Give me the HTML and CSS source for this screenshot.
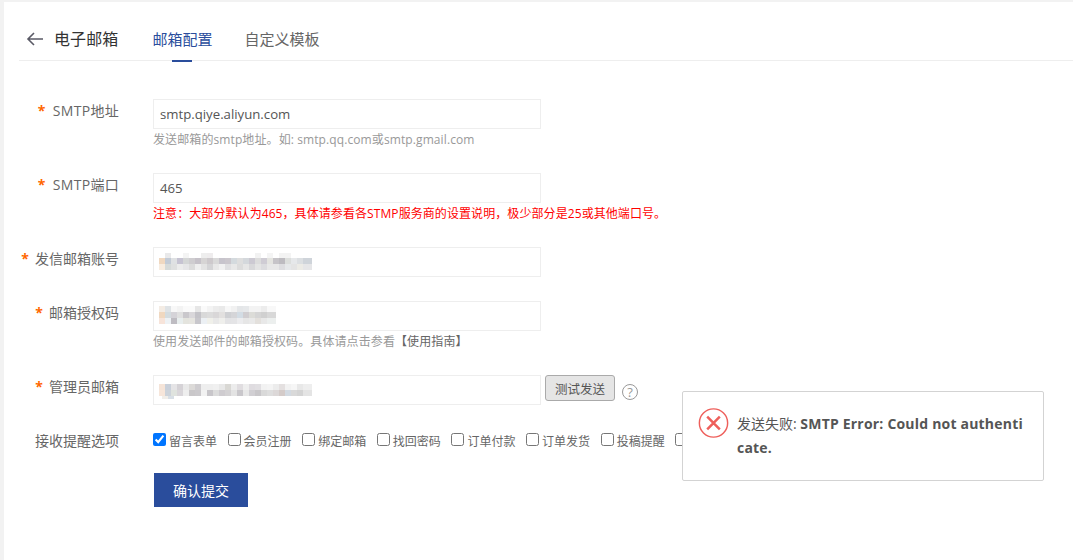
FILE: index.html
```html
<!DOCTYPE html>
<html lang="zh-CN">
<head>
<meta charset="utf-8">
<title>电子邮箱</title>
<link rel="stylesheet" href="styles.css">
</head>
<body>
<main class="page">
  <header class="head">
    <svg class="back" width="18" height="14" viewBox="0 0 18 14"><path d="M17 7H2M8 1L2 7l6 6" fill="none" stroke="#5a5a66" stroke-width="1.6"/></svg>
    <h1 class="title">电子邮箱</h1>
    <nav class="tabs">
      <a class="tab active">邮箱配置</a>
      <a class="tab">自定义模板</a>
    </nav>
  </header>
  <form class="form">
    <div class="row">
      <label class="lab latin"><i>*</i>SMTP地址</label>
      <div class="field"><div class="input">smtp.qiye.aliyun.com</div><p class="hint">发送邮箱的smtp地址。如: smtp.qq.com或smtp.gmail.com</p></div>
    </div>
    <div class="row">
      <label class="lab latin"><i>*</i>SMTP端口</label>
      <div class="field"><div class="input">465</div><p class="hint red">注意：大部分默认为465，具体请参看各STMP服务商的设置说明，极少部分是25或其他端口号。</p></div>
    </div>
    <div class="row">
      <label class="lab"><i>*</i>发信邮箱账号</label>
      <div class="field"><div class="input">
        <svg class="mosaic m1" width="153" height="17" viewBox="0 0 153 17" shape-rendering="crispEdges">
          <g>
            <rect x="6" width="6" height="5" fill="#e9e9ea"/><rect x="24" width="6" height="5" fill="#f4f4f4"/><rect x="42" width="6" height="5" fill="#eee"/><rect x="48" width="6" height="5" fill="#eeeced"/><rect x="96" width="6" height="5" fill="#f2f2f2"/><rect x="108" width="6" height="5" fill="#f4f4f4"/><rect x="120" width="12" height="5" fill="#f3f3f3"/>
          </g>
          <g>
            <rect y="5" width="6" height="6" fill="#f0d8c0"/><rect x="6" y="5" width="6" height="6" fill="#c3cbd6"/><rect x="12" y="5" width="6" height="6" fill="#dfe1e3"/><rect x="18" y="5" width="6" height="6" fill="#c6c3d2"/><rect x="24" y="5" width="6" height="6" fill="#d4d6d6"/><rect x="30" y="5" width="6" height="6" fill="#cfcdd0"/><rect x="36" y="5" width="6" height="6" fill="#c6c2c9"/><rect x="42" y="5" width="6" height="6" fill="#d6d4d4"/><rect x="48" y="5" width="6" height="6" fill="#cdc9cc"/><rect x="54" y="5" width="6" height="6" fill="#d9d9d9"/><rect x="60" y="5" width="6" height="6" fill="#c7c4cc"/><rect x="66" y="5" width="6" height="6" fill="#cbc7cd"/><rect x="72" y="5" width="6" height="6" fill="#d4dade"/><rect x="78" y="5" width="6" height="6" fill="#dedede"/><rect x="84" y="5" width="6" height="6" fill="#d4d8dc"/><rect x="90" y="5" width="6" height="6" fill="#ccc9d2"/><rect x="96" y="5" width="6" height="6" fill="#dcdcdc"/><rect x="102" y="5" width="6" height="6" fill="#cfccd4"/><rect x="108" y="5" width="6" height="6" fill="#e4e4e0"/><rect x="114" y="5" width="6" height="6" fill="#c6c4c8"/><rect x="120" y="5" width="6" height="6" fill="#bdbbc0"/><rect x="126" y="5" width="6" height="6" fill="#dcdedc"/><rect x="132" y="5" width="6" height="6" fill="#e6e8ea"/><rect x="138" y="5" width="6" height="6" fill="#dcdfe2"/><rect x="144" y="5" width="9" height="6" fill="#cfd4da"/>
          </g>
          <g>
            <rect y="11" width="6" height="6" fill="#f8ecdf"/><rect x="6" y="11" width="6" height="6" fill="#d6dad9"/><rect x="12" y="11" width="6" height="6" fill="#dfe0e0"/><rect x="18" y="11" width="6" height="6" fill="#ececec"/><rect x="24" y="11" width="6" height="6" fill="#e6e6e8"/><rect x="30" y="11" width="6" height="6" fill="#dcdcdc"/><rect x="36" y="11" width="6" height="6" fill="#efefef"/><rect x="42" y="11" width="6" height="6" fill="#e3e3e3"/><rect x="48" y="11" width="6" height="6" fill="#d4d4d6"/><rect x="54" y="11" width="6" height="6" fill="#e8e8e8"/><rect x="60" y="11" width="6" height="6" fill="#f1f1f1"/><rect x="66" y="11" width="6" height="6" fill="#e0e0e2"/><rect x="72" y="11" width="6" height="6" fill="#e8e8e8"/><rect x="78" y="11" width="6" height="6" fill="#dcdcdc"/><rect x="84" y="11" width="6" height="6" fill="#e6e6e6"/><rect x="90" y="11" width="6" height="6" fill="#d8d8da"/><rect x="96" y="11" width="6" height="6" fill="#e4e4e4"/><rect x="102" y="11" width="6" height="6" fill="#dcdcdf"/><rect x="108" y="11" width="12" height="6" fill="#e8e8e8"/><rect x="120" y="11" width="6" height="6" fill="#dddde0"/><rect x="126" y="11" width="6" height="6" fill="#e6e8ea"/><rect x="132" y="11" width="6" height="6" fill="#e4e4e4"/><rect x="138" y="11" width="6" height="6" fill="#ecebe6"/><rect x="144" y="11" width="9" height="6" fill="#e6e6e8"/>
          </g>
        </svg>
      </div></div>
    </div>
    <div class="row">
      <label class="lab"><i>*</i>邮箱授权码</label>
      <div class="field"><div class="input">
        <svg class="mosaic m2" width="117" height="18" viewBox="0 0 117 18" shape-rendering="crispEdges">
          <g>
            <rect width="6" height="6" fill="#f4ece4"/><rect x="6" width="6" height="6" fill="#dfe3e6"/><rect x="12" width="6" height="6" fill="#f8f8f8"/><rect x="18" width="6" height="6" fill="#f3f3f3"/><rect x="24" width="12" height="6" fill="#fafafa"/><rect x="36" width="6" height="6" fill="#e6e6e6"/><rect x="42" width="6" height="6" fill="#fafafa"/><rect x="48" width="6" height="6" fill="#f3f3f3"/><rect x="54" width="6" height="6" fill="#ececec"/><rect x="60" width="6" height="6" fill="#e9e9e9"/><rect x="66" width="6" height="6" fill="#f7f7f7"/><rect x="72" width="6" height="6" fill="#f1f1f1"/><rect x="78" width="6" height="6" fill="#e4e6e8"/><rect x="84" width="6" height="6" fill="#e6e8ea"/><rect x="90" width="12" height="6" fill="#f3f3f3"/><rect x="102" width="6" height="6" fill="#ececec"/><rect x="108" width="9" height="6" fill="#f8f8f8"/>
          </g>
          <g>
            <rect y="6" width="6" height="6" fill="#f0d8c0"/><rect x="6" y="6" width="6" height="6" fill="#d4dce0"/><rect x="12" y="6" width="6" height="6" fill="#d5d3d8"/><rect x="18" y="6" width="6" height="6" fill="#e0e0e0"/><rect x="24" y="6" width="6" height="6" fill="#cac8cc"/><rect x="30" y="6" width="6" height="6" fill="#d9d7da"/><rect x="36" y="6" width="6" height="6" fill="#c4c3c8"/><rect x="42" y="6" width="6" height="6" fill="#d9d9d9"/><rect x="48" y="6" width="6" height="6" fill="#dcdcdc"/><rect x="54" y="6" width="6" height="6" fill="#d9d7d8"/><rect x="60" y="6" width="6" height="6" fill="#e2e0df"/><rect x="66" y="6" width="6" height="6" fill="#cfd0d3"/><rect x="72" y="6" width="6" height="6" fill="#d5d5d8"/><rect x="78" y="6" width="6" height="6" fill="#d3dce4"/><rect x="84" y="6" width="6" height="6" fill="#d0cdd0"/><rect x="90" y="6" width="6" height="6" fill="#dcdcd8"/><rect x="96" y="6" width="6" height="6" fill="#d5d5d5"/><rect x="102" y="6" width="6" height="6" fill="#d0d0d0"/><rect x="108" y="6" width="9" height="6" fill="#d8d8d8"/>
          </g>
          <g>
            <rect y="12" width="6" height="6" fill="#f7e4da"/><rect x="6" y="12" width="6" height="6" fill="#eef2f5"/><rect x="12" y="12" width="6" height="6" fill="#bebcc2"/><rect x="18" y="12" width="6" height="6" fill="#e8eeee"/><rect x="24" y="12" width="6" height="6" fill="#e4e4de"/><rect x="30" y="12" width="6" height="6" fill="#e6e5e0"/><rect x="36" y="12" width="6" height="6" fill="#c8c7cc"/><rect x="42" y="12" width="6" height="6" fill="#ecf0f4"/><rect x="48" y="12" width="6" height="6" fill="#f0f0ea"/><rect x="54" y="12" width="6" height="6" fill="#e8e8e8"/><rect x="60" y="12" width="6" height="6" fill="#efefec"/><rect x="66" y="12" width="6" height="6" fill="#e3e3e5"/><rect x="72" y="12" width="6" height="6" fill="#e4e4e6"/><rect x="78" y="12" width="6" height="6" fill="#ececee"/><rect x="84" y="12" width="6" height="6" fill="#e6e6e6"/><rect x="90" y="12" width="6" height="6" fill="#e9e9e9"/><rect x="96" y="12" width="6" height="6" fill="#e3e0dc"/><rect x="102" y="12" width="6" height="6" fill="#e8e8e8"/><rect x="108" y="12" width="9" height="6" fill="#ecefee"/>
          </g>
        </svg>
      </div><p class="hint">使用发送邮件的邮箱授权码。具体请点击参看<b class="guide">【使用指南】</b></p></div>
    </div>
    <div class="row">
      <label class="lab"><i>*</i>管理员邮箱</label>
      <div class="field inline"><div class="input">
        <svg class="mosaic m3" width="153" height="15" viewBox="0 0 153 15" shape-rendering="crispEdges">
          <g>
            <rect width="6" height="6" fill="#f5e4d8"/><rect x="6" width="6" height="6" fill="#c9d0da"/><rect x="12" width="6" height="6" fill="#e5e4e6"/><rect x="18" width="6" height="6" fill="#d5d2d6"/><rect x="24" width="6" height="6" fill="#e9e9e9"/><rect x="30" width="6" height="6" fill="#dcdad8"/><rect x="36" width="6" height="6" fill="#cfcdd0"/><rect x="42" width="12" height="6" fill="#eee"/><rect x="54" width="6" height="6" fill="#f0f0f0"/><rect x="60" width="6" height="6" fill="#e8e8e8"/><rect x="66" width="6" height="6" fill="#d9d8d4"/><rect x="72" width="6" height="6" fill="#ececec"/><rect x="78" width="6" height="6" fill="#e0dde0"/><rect x="84" width="6" height="6" fill="#eee"/><rect x="90" width="6" height="6" fill="#dfdce0"/><rect x="96" width="6" height="6" fill="#e1dfe2"/><rect x="102" width="6" height="6" fill="#f2f2f2"/><rect x="108" width="6" height="6" fill="#f4f4f4"/><rect x="114" width="6" height="6" fill="#ececec"/><rect x="120" width="6" height="6" fill="#e4e0e0"/><rect x="126" width="6" height="6" fill="#f2f2f2"/><rect x="132" width="6" height="6" fill="#f6f6f6"/><rect x="138" width="6" height="6" fill="#e8e8e8"/><rect x="144" width="9" height="6" fill="#eee"/>
          </g>
          <g>
            <rect y="6" width="6" height="6" fill="#f7e6da"/><rect x="6" y="6" width="6" height="6" fill="#cdd3da"/><rect x="12" y="6" width="6" height="6" fill="#dfe3de"/><rect x="18" y="6" width="6" height="6" fill="#d9d6da"/><rect x="24" y="6" width="6" height="6" fill="#eee"/><rect x="30" y="6" width="6" height="6" fill="#c9c7c9"/><rect x="36" y="6" width="6" height="6" fill="#cbc9cc"/><rect x="42" y="6" width="6" height="6" fill="#f2f2f2"/><rect x="48" y="6" width="6" height="6" fill="#c8c6ca"/><rect x="54" y="6" width="6" height="6" fill="#dcdcdc"/><rect x="60" y="6" width="6" height="6" fill="#cfccd0"/><rect x="66" y="6" width="6" height="6" fill="#d4d2d4"/><rect x="72" y="6" width="6" height="6" fill="#e3e3e3"/><rect x="78" y="6" width="6" height="6" fill="#c9c7cb"/><rect x="84" y="6" width="6" height="6" fill="#e8e8e8"/><rect x="90" y="6" width="6" height="6" fill="#d1cfd3"/><rect x="96" y="6" width="6" height="6" fill="#c9c7ca"/><rect x="102" y="6" width="6" height="6" fill="#d9d9d9"/><rect x="108" y="6" width="6" height="6" fill="#dedede"/><rect x="114" y="6" width="6" height="6" fill="#dcd8d8"/><rect x="120" y="6" width="6" height="6" fill="#d4cbc9"/><rect x="126" y="6" width="6" height="6" fill="#d3dae2"/><rect x="132" y="6" width="6" height="6" fill="#d9d9d9"/><rect x="138" y="6" width="6" height="6" fill="#d4d4d4"/><rect x="144" y="6" width="9" height="6" fill="#e4e4e4"/>
          </g>
          <g>
            <rect x="3" y="12" width="6" height="3" fill="#f1eee9"/><rect x="9" y="12" width="6" height="3" fill="#d8dfe6"/>
          </g>
        </svg>
      </div><button type="button" class="test">测试发送</button><span class="help">?</span></div>
    </div>
    <div class="row checks">
      <label class="lab">接收提醒选项</label>
      <div class="opts">
        <label class="opt"><input type="checkbox" checked>留言表单</label>
        <label class="opt"><input type="checkbox">会员注册</label>
        <label class="opt"><input type="checkbox">绑定邮箱</label>
        <label class="opt"><input type="checkbox">找回密码</label>
        <label class="opt"><input type="checkbox">订单付款</label>
        <label class="opt"><input type="checkbox">订单发货</label>
        <label class="opt"><input type="checkbox">投稿提醒</label>
        <label class="opt"><input type="checkbox">站内通知</label>
      </div>
    </div>
    <button type="button" class="submit">确认提交</button>
  </form>
  <div class="toast">
    <svg class="err" width="31" height="32" viewBox="0 0 32 32"><circle cx="16" cy="16" r="14.6" fill="none" stroke="#ee5f5b" stroke-width="1.5"/><path d="M9.5 9.5l13 13M22.5 9.5l-13 13" stroke="#ee5f5b" stroke-width="2.6" fill="none"/></svg>
    <p class="msg">发送失败: <b>SMTP Error: Could not authenticate.</b></p>
  </div>
</main>
</body>
</html>
```
FILE: styles.css
```css
* { box-sizing: border-box; }
html, body { margin: 0; height: 100%; }
body {
  background: #f2f2f2;
  padding: 2px 0 0 4px;
  font-family: "Open Sans", "Noto Sans CJK SC", sans-serif;
  font-size: 14px;
  color: #666;
  overflow: hidden;
}
.page { position: relative; background: #fff; height: 558px; padding-left: 15px; }
.head { display: flex; align-items: center; height: 59px; border-bottom: 1px solid #eee; padding-top: 16px; }
.back { margin-left: 7px; margin-right: 10px; }
.title { margin: 0; font-size: 16px; font-weight: 400; color: #333; line-height: 24px; letter-spacing: .1px; }
.tabs { display: flex; margin-left: 34px; gap: 32px; height: 100%; }
.tab { position: relative; font-size: 15px; line-height: 43px; color: #666; }
.tab.active { color: #2a4d9c; }
.tab.active::after { content: ""; position: absolute; left: 20px; width: 20px; bottom: -2px; height: 2px; background: #2a4d9c; }
.form { padding-top: 38px; margin-left: -15px; }
.row { display: flex; margin-bottom: 24px; }
.lab { width: 115px; text-align: right; line-height: 24px; flex: none; color: #666; }
.lab i { font-style: normal; color: #f60; margin-right: 6px; font-weight: 700; }
.lab.latin { letter-spacing: .3px; }
.lab.latin i { margin-right: 7px; }
.field { margin-left: 34px; width: 388px; flex: none; }
.field.inline { display: flex; align-items: flex-start; width: auto; }
.input { width: 388px; height: 30px; border: 1px solid #eee; line-height: 28px; padding-left: 6px; color: #555; flex: none; font-size: 13.2px; }
.hint { margin: 0; height: 20px; font-size: 12px; line-height: 22px; color: #999; white-space: nowrap; letter-spacing: .1px; }
.hint.red { color: #f00; letter-spacing: .08px; }
.guide { font-weight: 400; color: #666; }
.mosaic { display: block; margin-left: -1px; }
.m1 { margin-top: 5px; }
.m2 { margin-top: 4px; }
.m3 { margin-top: 8px; }
.test { width: 70px; height: 26px; margin-left: 4px; padding: 0; border: 1px solid #aaa; border-radius: 3px; background: #e5e5e5; font: inherit; font-size: 12.5px; color: #555; flex: none; }
.help { margin: 9px 0 0 7px; flex: none; width: 16px; height: 16px; border: 1px solid #999; border-radius: 50%; font-size: 13px; line-height: 14px; text-align: center; color: #999; }
.checks { margin-bottom: 21px; height: 23px; }
.opts { display: flex; margin-left: 34px; gap: 10.6px; white-space: nowrap; align-items: flex-start; }
.opt { display: flex; align-items: center; gap: 3px; font-size: 12px; line-height: 26px; color: #666; }
.opt input { margin: 0 0 6px; width: 13px; height: 13px; }
.submit { display: block; margin-left: 150px; width: 94px; height: 34px; border: 0; background: #2a4d9c; color: #fff; font: inherit; font-size: 14px; }
.toast { position: absolute; left: 678px; top: 389px; width: 362px; height: 90px; background: #fff; border: 1px solid #d3d3d3; border-radius: 2px; padding: 15px 20px 0 15px; display: flex; align-items: flex-start; }
.err { flex: none; }
.msg { margin: 5px 0 0 8px; line-height: 24px; color: #555; word-break: break-all; font-size: 14px; }
.msg b { letter-spacing: .2px; }
```
